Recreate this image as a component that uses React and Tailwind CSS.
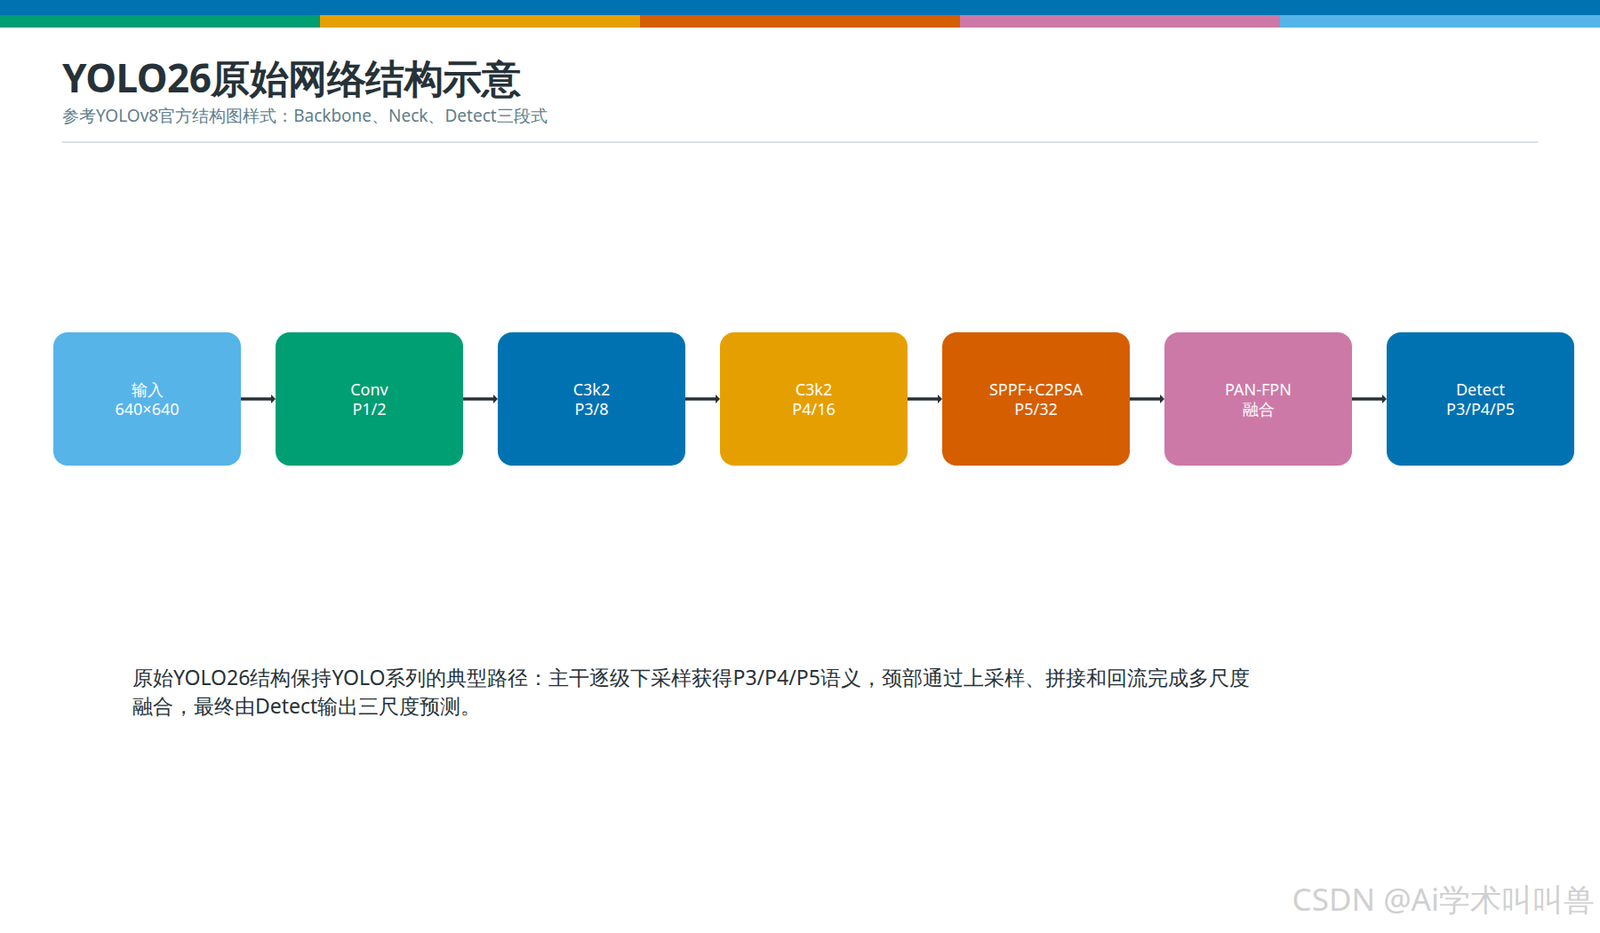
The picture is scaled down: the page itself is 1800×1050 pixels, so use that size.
const stages = [
  { bg: 'bg-[#56b4e9]', lines: ['输入', '640×640'] },
  { bg: 'bg-[#009e73]', lines: ['Conv', 'P1/2'] },
  { bg: 'bg-[#0072b2]', lines: ['C3k2', 'P3/8'] },
  { bg: 'bg-[#e69f00]', lines: ['C3k2', 'P4/16'] },
  { bg: 'bg-[#d55e00]', lines: ['SPPF+C2PSA', 'P5/32'] },
  { bg: 'bg-[#cc79a7]', lines: ['PAN-FPN', '融合'] },
  { bg: 'bg-[#0072b2]', lines: ['Detect', 'P3/P4/P5'] },
];

function Arrow() {
  return (
    <svg width="39" height="14" viewBox="0 0 39 14" className="shrink-0">
      <line x1="0" y1="7" x2="35" y2="7" stroke="#263238" strokeWidth="3.5" />
      <path d="M34 2 L39 7 L34 12 Z" fill="#263238" />
    </svg>
  );
}

export default function App() {
  return (
    <div className="relative w-[1800px] h-[1050px] bg-white overflow-hidden font-['Noto_Sans','Noto_Sans_CJK_SC',sans-serif]">
      <div className="h-[17px] bg-[#0072b2]" />
      <div className="flex h-[14px]">
        <div className="flex-1 bg-[#009e73]" />
        <div className="flex-1 bg-[#e69f00]" />
        <div className="flex-1 bg-[#d55e00]" />
        <div className="flex-1 bg-[#cc79a7]" />
        <div className="flex-1 bg-[#56b4e9]" />
      </div>

      <div className="pl-[70px] pr-[70px] pt-[28px]">
        <h1 className="text-[44px] leading-[56px] font-bold text-[#263238] tracking-[-0.5px]">YOLO26原始网络结构示意</h1>
        <p className="text-[19px] leading-[26px] text-[#607d8b] mt-[2px]">参考YOLOv8官方结构图样式：Backbone、Neck、Detect三段式</p>
        <div className="mt-[16px] h-[2px] bg-[#d9e0e7]" />
      </div>

      <div className="flex items-center pl-[60px] mt-[213px]">
        {stages.map((s, i) => (
          <div key={i} className="flex items-center">
            <div className={`w-[211px] h-[150px] rounded-[16px] ${s.bg} flex flex-col items-center justify-center text-white text-[18px] leading-[22px]`}>
              {s.lines.map((l, j) => <span key={j}>{l}</span>)}
            </div>
            {i < stages.length - 1 && <Arrow />}
          </div>
        ))}
      </div>

      <p className="ml-[149px] mt-[222px] w-[1440px] text-[23px] leading-[32px] text-[#263238]">
        原始YOLO26结构保持YOLO系列的典型路径：主干逐级下采样获得P3/P4/P5语义，颈部通过上采样、拼接和回流完成多尺度<br />融合，最终由Detect输出三尺度预测。
      </p>

      <div className="absolute right-[6px] bottom-[12px] text-[35px] text-[#d0d0d0] font-['Liberation_Sans','Noto_Sans_CJK_SC',sans-serif]">
        CSDN @Ai学术叫叫兽
      </div>
    </div>
  );
}
